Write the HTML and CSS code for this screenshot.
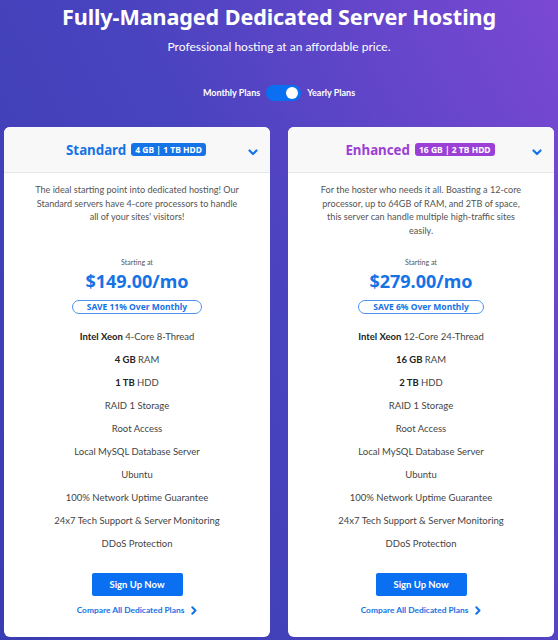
FILE: index.html
```html
<!DOCTYPE html>
<html lang="en">
<head>
<meta charset="utf-8">
<title>Dedicated Server Hosting</title>
<link rel="stylesheet" href="styles.css">
</head>
<body>
<div class="page">
  <header class="hero">
    <h1 class="hero-title">Fully-Managed Dedicated Server Hosting</h1>
    <p class="hero-sub">Professional hosting at an affordable price.</p>
    <div class="toggle-row">
      <span class="toggle-label">Monthly Plans</span>
      <span class="toggle"><span class="knob"></span></span>
      <span class="toggle-label">Yearly Plans</span>
    </div>
  </header>

  <main class="plans">
    <section class="card">
      <div class="card-head">
        <h2 class="plan-name blue">Standard</h2>
        <span class="badge bg-blue">4 GB | 1 TB HDD</span>
        <svg class="chev" width="10" height="7" viewBox="0 0 10 7"><path d="M1.5 1.5 L5 5 L8.5 1.5" fill="none" stroke="#1473e6" stroke-width="2.2" stroke-linecap="round" stroke-linejoin="round"/></svg>
      </div>
      <div class="card-body">
        <p class="desc">The ideal starting point into dedicated hosting! Our Standard servers have 4-core processors to handle all of your sites' visitors!</p>
        <p class="starting">Starting at</p>
        <p class="price">$149.00/mo</p>
        <span class="save">SAVE 11% Over Monthly</span>
        <ul class="features">
          <li><b>Intel Xeon</b> 4-Core 8-Thread</li>
          <li><b>4 GB</b> RAM</li>
          <li><b>1 TB</b> HDD</li>
          <li>RAID 1 Storage</li>
          <li>Root Access</li>
          <li>Local MySQL Database Server</li>
          <li>Ubuntu</li>
          <li>100% Network Uptime Guarantee</li>
          <li>24x7 Tech Support &amp; Server Monitoring</li>
          <li>DDoS Protection</li>
        </ul>
        <a class="btn" href="#">Sign Up Now</a>
        <a class="compare" href="#">Compare All Dedicated Plans <svg width="6" height="9" viewBox="0 0 6 9"><path d="M1.3 1.2 L4.5 4.5 L1.3 7.8" fill="none" stroke="#1473e6" stroke-width="2" stroke-linecap="round" stroke-linejoin="round"/></svg></a>
      </div>
    </section>

    <section class="card">
      <div class="card-head">
        <h2 class="plan-name purple">Enhanced</h2>
        <span class="badge bg-purple">16 GB | 2 TB HDD</span>
        <svg class="chev" width="10" height="7" viewBox="0 0 10 7"><path d="M1.5 1.5 L5 5 L8.5 1.5" fill="none" stroke="#1473e6" stroke-width="2.2" stroke-linecap="round" stroke-linejoin="round"/></svg>
      </div>
      <div class="card-body">
        <p class="desc">For the hoster who needs it all. Boasting a 12-core processor, up to 64GB of RAM, and 2TB of space, this server can handle multiple high-traffic sites easily.</p>
        <p class="starting">Starting at</p>
        <p class="price">$279.00/mo</p>
        <span class="save">SAVE 6% Over Monthly</span>
        <ul class="features">
          <li><b>Intel Xeon</b> 12-Core 24-Thread</li>
          <li><b>16 GB</b> RAM</li>
          <li><b>2 TB</b> HDD</li>
          <li>RAID 1 Storage</li>
          <li>Root Access</li>
          <li>Local MySQL Database Server</li>
          <li>Ubuntu</li>
          <li>100% Network Uptime Guarantee</li>
          <li>24x7 Tech Support &amp; Server Monitoring</li>
          <li>DDoS Protection</li>
        </ul>
        <a class="btn" href="#">Sign Up Now</a>
        <a class="compare" href="#">Compare All Dedicated Plans <svg width="6" height="9" viewBox="0 0 6 9"><path d="M1.3 1.2 L4.5 4.5 L1.3 7.8" fill="none" stroke="#1473e6" stroke-width="2" stroke-linecap="round" stroke-linejoin="round"/></svg></a>
      </div>
    </section>
  </main>
</div>
</body>
</html>
```

FILE: styles.css
```css
html, body {
  margin: 0;
  height: 640px;
  overflow: hidden;
}
body {
  background: linear-gradient(62deg, #3a3cb2 0%, #4843bf 50%, #7b48d4 100%);
  font-family: "Lato", "Liberation Sans", sans-serif;
  color: #444;
}
.page {
  padding: 0 4px;
}
.hero {
  text-align: center;
  color: #fff;
  padding-top: 4px;
}
.hero-title {
  margin: 0;
  font-family: "Noto Sans", sans-serif;
  font-weight: 700;
  font-size: 21.6px;
  line-height: 26px;
  letter-spacing: -0.1px;
}
.hero-sub {
  margin: 9px 0 0;
  font-size: 12px;
  line-height: 15px;
}
.toggle-row {
  display: flex;
  justify-content: center;
  align-items: center;
  gap: 6px;
  margin-top: 30px;
  height: 17px;
}
.toggle-label {
  font-size: 9px;
  font-weight: 700;
}
.toggle {
  display: flex;
  align-items: center;
  justify-content: flex-end;
  width: 35px;
  height: 16px;
  border-radius: 8px;
  background: #0a6ff0;
  padding: 0 3px;
  box-sizing: border-box;
}
.knob {
  width: 12px;
  height: 12px;
  border-radius: 50%;
  background: #fff;
}
.plans {
  display: grid;
  grid-template-columns: 266px 266px;
  column-gap: 18px;
  margin-top: 26px;
}
.card {
  background: #fff;
  border-radius: 6px;
  height: 510px;
  overflow: hidden;
}
.card-head {
  position: relative;
  height: 45px;
  background: #f8f8f8;
  border-bottom: 1px solid #e6e6e6;
  display: flex;
  align-items: center;
  justify-content: center;
  gap: 5px;
  padding-right: 2px;
}
.plan-name {
  margin: 0;
  font-family: "Noto Sans", sans-serif;
  font-weight: 700;
  font-size: 13.3px;
  line-height: 18px;
}
.blue { color: #1473e6; }
.purple { color: #9b3fd6; }
.badge {
  font-family: "Noto Sans", sans-serif;
  font-weight: 700;
  font-size: 8.5px;
  line-height: 13px;
  color: #fff;
  padding: 0 4px;
  border-radius: 3px;
}
.bg-blue { background: #1473e6; }
.bg-purple { background: #9b3fd6; }
.chev {
  position: absolute;
  right: 12px;
  top: 22px;
}
.card-body {
  display: flex;
  flex-direction: column;
  align-items: center;
  text-align: center;
  padding: 10px 28px 0;
}
.desc {
  margin: 0;
  font-size: 9.1px;
  line-height: 13.5px;
  color: #555;
  height: 75px;
}
.starting {
  margin: 0;
  font-size: 7px;
  line-height: 9px;
  color: #555;
}
.price {
  margin: 3px 0 0;
  font-family: "Noto Sans", sans-serif;
  font-weight: 700;
  font-size: 18px;
  line-height: 22px;
  color: #1473e6;
}
.save {
  margin-top: 8px;
  font-family: "Noto Sans", sans-serif;
  font-weight: 700;
  font-size: 8.5px;
  line-height: 12px;
  color: #1473e6;
  border: 1.5px solid #4a95ea;
  border-radius: 8px;
  padding: 0 14px;
}
.features {
  list-style: none;
  margin: 11px 0 0;
  padding: 0;
}
.features li {
  font-size: 9.5px;
  line-height: 23px;
  color: #444;
}
.features b {
  color: #222;
}
.btn {
  margin-top: 18px;
  width: 91px;
  height: 23px;
  line-height: 23px;
  background: #0a6ff0;
  color: #fff;
  font-size: 9.5px;
  font-weight: 700;
  text-decoration: none;
  border-radius: 2px;
}
.compare {
  margin-top: 9px;
  font-size: 8.4px;
  font-weight: 700;
  color: #1473e6;
  text-decoration: none;
  display: flex;
  align-items: center;
  gap: 7px;
}
```
